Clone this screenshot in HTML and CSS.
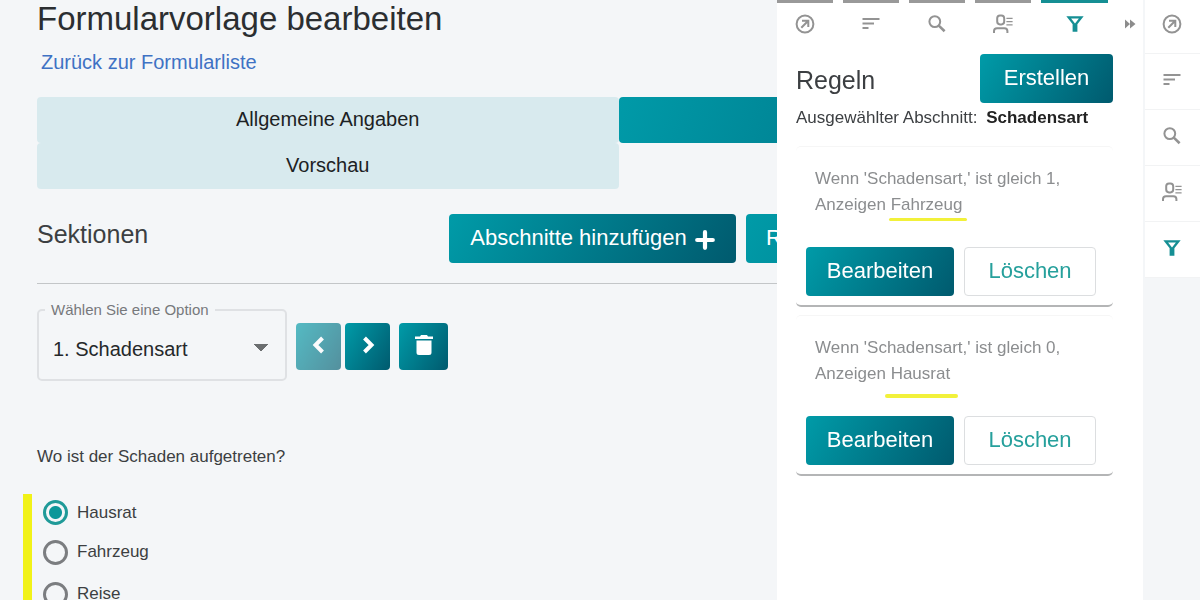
FILE: index.html
```html
<!DOCTYPE html>
<html lang="de">
<head>
    <meta charset="UTF-8">
    <meta name="viewport" content="width=device-width, initial-scale=1.0">
    <title>Formularvorlage bearbeiten</title>
    <link rel="stylesheet" href="styles.css">
</head>
<body>
    <!-- Shared icons -->
    <svg class="sprite" aria-hidden="true">
        <symbol id="icon-open" viewBox="0 0 20 20">
            <circle cx="10" cy="10" r="8.4" />
            <path d="M6.3 13.7 13 7M7 6.7H13.3V13" />
        </symbol>
        <symbol id="icon-lines" viewBox="0 0 20 20">
            <path d="M1.5 5H18.5M1.5 9.5H13M1.5 14H7.5" />
        </symbol>
        <symbol id="icon-search" viewBox="0 0 20 20">
            <circle cx="7.8" cy="7.6" r="5.4" />
            <path d="M11.8 11.6 17.6 17.2" stroke-width="2.6" />
        </symbol>
        <symbol id="icon-user" viewBox="0 0 20 20">
            <rect x="4.2" y="1.4" width="7" height="9" rx="2.8" />
            <path d="M1 19V17Q1 14.2 4 14.2H11.4Q14.4 14.2 14.4 17V19" />
            <path d="M13.4 4.4H19.6M13.4 7.6H19.6M13.4 10.8H19.6" stroke-width="1.2" />
        </symbol>
        <symbol id="icon-filter" viewBox="0 0 20 20">
            <path d="M3.8 3.4H16.2L11.2 9.8V16.6H8.8V9.8Z" stroke-width="2.4" />
        </symbol>
    </svg>

    <main>
        <h1>Formularvorlage bearbeiten</h1>
        <a class="back" href="#">Zurück zur Formularliste</a>

        <nav class="tabs">
            <button>Allgemeine Angaben</button>
            <button class="active" aria-label="Sektionen"></button>
            <button>Vorschau</button>
        </nav>

        <div class="section-head">
            <h2>Sektionen</h2>
            <button class="btn">Abschnitte hinzufügen
                <svg width="20" height="20" viewBox="0 0 20 20"><path d="M10 2.2V17.8M2.2 10H17.8" stroke="#fff" stroke-width="4.2" stroke-linecap="round" /></svg>
            </button>
            <button class="btn more">R</button>
        </div>

        <div class="picker">
            <fieldset>
                <legend><label for="section">Wählen Sie eine Option</label></legend>
                <select id="section">
                    <option>1. Schadensart</option>
                </select>
            </fieldset>
            <button class="btn step" aria-label="Zurück" disabled>
                <svg width="18" height="20" viewBox="0 0 18 20"><path d="M12.5 3 5.5 10 12.5 17" /></svg>
            </button>
            <button class="btn step" aria-label="Weiter">
                <svg width="18" height="20" viewBox="0 0 18 20"><path d="M5.5 3 12.5 10 5.5 17" /></svg>
            </button>
            <button class="btn trash" aria-label="Abschnitt löschen">
                <svg width="20" height="22" viewBox="0 0 20 22"><path d="M1 2.5H6L7 1H13L14 2.5H19V5H1ZM2.5 6.5H17.5V18.5Q17.5 21 15 21H5Q2.5 21 2.5 18.5Z" fill="#fff" /></svg>
            </button>
        </div>

        <p class="question">Wo ist der Schaden aufgetreten?</p>
        <div class="options">
            <label><input type="radio" name="damage" checked>Hausrat</label>
            <label><input type="radio" name="damage">Fahrzeug</label>
            <label><input type="radio" name="damage">Reise</label>
        </div>
    </main>

    <!-- Rules panel -->
    <aside class="sidebar">
        <div class="panel">
            <div class="panel-tabs">
                <button aria-label="Öffnen"><svg class="icon"><use href="#icon-open" /></svg></button>
                <button aria-label="Struktur"><svg class="icon"><use href="#icon-lines" /></svg></button>
                <button aria-label="Suche"><svg class="icon"><use href="#icon-search" /></svg></button>
                <button aria-label="Benutzer"><svg class="icon"><use href="#icon-user" /></svg></button>
                <button class="active" aria-label="Regeln"><svg class="icon"><use href="#icon-filter" /></svg></button>
                <button class="collapse" aria-label="Einklappen">
                    <svg width="12" height="10" viewBox="0 0 12 10"><path d="M1 0.5 6 5 1 9.5ZM6 0.5 11.5 5 6 9.5Z" fill="#8c8c8c" /></svg>
                </button>
            </div>

            <div class="panel-body">
                <div class="panel-head">
                    <h2>Regeln</h2>
                    <button class="btn">Erstellen</button>
                </div>
                <p class="selected">Ausgewählter Abschnitt: <strong>Schadensart</strong></p>

                <div class="rule">
                    <p>Wenn 'Schadensart,' ist gleich 1,<br>Anzeigen <span class="mark">Fahrzeug</span></p>
                    <div class="rule-buttons">
                        <button class="btn">Bearbeiten</button>
                        <button class="btn outline">Löschen</button>
                    </div>
                </div>

                <div class="rule">
                    <p>Wenn 'Schadensart,' ist gleich 0,<br>Anzeigen <span class="mark low">Hausrat</span></p>
                    <div class="rule-buttons">
                        <button class="btn">Bearbeiten</button>
                        <button class="btn outline">Löschen</button>
                    </div>
                </div>
            </div>
        </div>

        <div class="rail">
            <button aria-label="Öffnen"><svg class="icon"><use href="#icon-open" /></svg></button>
            <button aria-label="Struktur"><svg class="icon"><use href="#icon-lines" /></svg></button>
            <button aria-label="Suche"><svg class="icon"><use href="#icon-search" /></svg></button>
            <button aria-label="Benutzer"><svg class="icon"><use href="#icon-user" /></svg></button>
            <button class="active" aria-label="Regeln"><svg class="icon"><use href="#icon-filter" /></svg></button>
        </div>
    </aside>
</body>
</html>
```
FILE: styles.css
```css
* {
    box-sizing: border-box;
}
body {
    margin: 0;
    height: 100vh;
    overflow: hidden;
    font-family: "Liberation Sans", Arial, sans-serif;
    font-size: 17px;
    color: #3c3f42;
    background-color: #f4f6f8;
}
h1, h2, p {
    margin: 0;
    font-weight: normal;
}
button, select {
    font-family: inherit;
    border: none;
    cursor: pointer;
}
.sprite {
    display: none;
}
main {
    padding-left: 37px;
}
h1 {
    font-size: 33px;
    line-height: 38px;
    color: #2b2e31;
}
h2 {
    font-size: 25px;
    line-height: 30px;
}
.back {
    display: block;
    margin: 12px 0 23px 4px;
    font-size: 20px;
    line-height: 24px;
    color: #3f72c4;
    text-decoration: none;
}

/* Tabs */
.tabs {
    display: grid;
    grid-template-columns: 1fr 1fr;
    grid-auto-rows: 46px;
}
.tabs button {
    padding: 0 0 2px;
    font-size: 20px;
    color: #1d2224;
    background-color: #d8eaee;
    border-radius: 4px;
}
.tabs .active {
    background: linear-gradient(110deg, #009aa8, #00596f);
}

/* Buttons */
.btn {
    display: flex;
    align-items: center;
    justify-content: center;
    height: 49px;
    padding: 0 20px 2px;
    font-size: 22px;
    color: #fff;
    background: linear-gradient(120deg, #009ba8, #005a6e);
    border-radius: 4px;
}
.btn.outline {
    color: #26a09c;
    background: #fff;
    border: 1px solid #dcdee0;
}

.section-head {
    display: grid;
    grid-template-columns: 402px 287px 1fr;
    column-gap: 10px;
    margin-top: 25px;
    padding-bottom: 20px;
    border-bottom: 1px solid #c3c6c8;
}
.section-head h2 {
    padding-top: 5px;
}
.section-head svg {
    margin: 4px 0 0 8px;
}
.more {
    justify-content: flex-start;
}

/* Section picker */
.picker {
    display: flex;
    align-items: flex-start;
    margin-top: 17px;
}
fieldset {
    width: 250px;
    height: 80px;
    margin: 0 9px 0 0;
    padding: 0 14px;
    border: 2px solid #dfe1e4;
    border-radius: 5px;
}
legend {
    margin-left: -8px;
    padding: 0 6px;
    font-size: 15px;
    line-height: 18px;
    color: #77797c;
}
select {
    width: 100%;
    height: 60px;
    font-size: 20px;
    color: #25282a;
    appearance: none;
    background: linear-gradient(to bottom right, #6b6e70 50%, transparent 50%) right 3px top 25px / 7px 7px no-repeat,
                linear-gradient(to bottom left, #6b6e70 50%, transparent 50%) right 10px top 25px / 7px 7px no-repeat;
    padding: 0;
    outline: none;
}
.step, .trash {
    height: 47px;
    margin-top: 22px;
    padding: 0 0 3px;
}
.step {
    width: 45px;
    margin-right: 4px;
}
.step path {
    fill: none;
    stroke: #fff;
    stroke-width: 4;
}
.step:disabled {
    opacity: .65;
}
.trash {
    width: 49px;
    margin-left: 5px;
}

/* Question */
.question {
    margin-top: 66px;
    line-height: 20px;
}
.options {
    margin: 27px 0 0 -14px;
    padding-left: 11px;
    border-left: 9px solid #f1f218;
}
.options label {
    display: flex;
    align-items: center;
    height: 42px;
}
.options label:first-child {
    height: 37px;
}
.options input {
    appearance: none;
    width: 25px;
    height: 25px;
    margin: 0 9px 0 0;
    border: 3px solid #7b7d80;
    border-radius: 50%;
}
.options input:checked {
    border-color: #1f9a98;
    background: radial-gradient(circle, #0c9799 6px, transparent 7px);
}

/* Sidebar lies over the form */
.sidebar {
    position: fixed;
    top: 0;
    right: 0;
    bottom: 0;
    display: flex;
}
.icon {
    width: 20px;
    height: 20px;
    fill: none;
    stroke: #939393;
    stroke-width: 2;
}
.active .icon {
    stroke: #158f94;
}
.panel {
    width: 366px;
    background-color: #fff;
}
.panel-tabs {
    display: grid;
    grid-template-columns: repeat(4, 56px) 67px 1fr;
    column-gap: 10px;
}
.panel-tabs button {
    display: flex;
    align-items: center;
    justify-content: center;
    height: 44px;
    padding: 0;
    background: none;
    border-top: 3px solid #999;
}
.panel-tabs .active {
    border-top-color: #158f94;
}
.panel-tabs .collapse {
    justify-content: flex-start;
    border-top-color: transparent;
    padding-left: 6px;
}
.panel-body {
    padding: 10px 30px 0 19px;
}
.panel-head {
    display: flex;
    align-items: center;
    justify-content: space-between;
}
.panel-head h2 {
    padding-top: 2px;
}
.panel-head .btn {
    width: 133px;
}
.selected {
    padding: 5px 0 18px;
    line-height: 20px;
}
.selected strong {
    margin-left: 4px;
    color: #222;
}
.rule {
    height: 161px;
    margin-bottom: 8px;
    padding: 19px 10px 0;
    border-top: 1px solid #f6f6f6;
    border-bottom: 2px solid #b4b5b6;
    border-radius: 5px;
}
.rule p {
    padding-left: 9px;
    line-height: 26px;
    color: #8b8d8f;
}
.mark {
    position: relative;
}
.mark::after {
    content: "";
    position: absolute;
    left: -2px;
    right: -5px;
    bottom: -7px;
    height: 3px;
    background-color: #f2f13a;
    border-radius: 2px;
}
.mark.low::after {
    left: -6px;
    right: -8px;
    bottom: -15px;
    height: 4px;
}
.rule-buttons {
    display: flex;
    gap: 10px;
    margin-top: 29px;
}
.rule-buttons .btn {
    width: 148px;
}
.rule-buttons .outline {
    width: 132px;
}

/* Icon rail */
.rail {
    width: 57px;
    margin-top: -2px;
    padding-left: 2px;
    background-color: #f4f6f8;
}
.rail button {
    display: flex;
    align-items: center;
    justify-content: center;
    width: 100%;
    height: 56px;
    padding: 0 2px 3px 0;
    background-color: #fff;
    border-bottom: 1px solid #f2f3f4;
}
```
